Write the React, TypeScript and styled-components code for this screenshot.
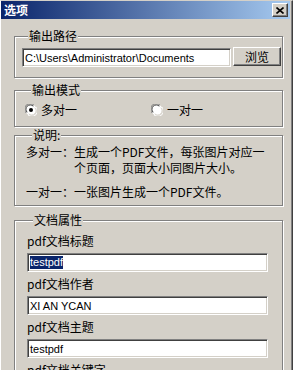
import React from "react";
import styled, { createGlobalStyle } from "styled-components";

const Global = createGlobalStyle`
  html, body { margin: 0; padding: 0; background: #d4d0c8; }
  body { font-family: "Noto Sans CJK SC", "Liberation Sans", sans-serif; font-size: 12px; color: #000; }
`;

const Window = styled.div`
  width: 293px;
  height: 370px;
  box-sizing: border-box;
  background: #d4d0c8;
  border-top: 1px solid #d4d0c8;
  border-left: 1px solid #ffffff;
  border-right: 1px solid #404040;
  box-shadow: inset -1px 0 0 #808080;
  padding-right: 2px;
  overflow: hidden;
  display: flex;
  flex-direction: column;
`;

const TitleBar = styled.div`
  height: 18px;
  flex: none;
  display: flex;
  align-items: center;
  justify-content: space-between;
  padding: 0 2px 0 3px;
  background: linear-gradient(to right, #0a246a, #a6caf0);
`;

const Title = styled.span`
  color: #fff;
  font-weight: bold;
  font-size: 12px;
  line-height: 14px;
`;

const CloseButton = styled.div`
  width: 16px;
  height: 14px;
  box-sizing: border-box;
  background: #d4d0c8;
  border: 1px solid;
  border-color: #ffffff #404040 #404040 #ffffff;
  box-shadow: inset -1px -1px 0 #808080;
  display: flex;
  align-items: center;
  justify-content: center;
`;

const Client = styled.div`
  padding: 10px 0 0 13px;
  display: flex;
  flex-direction: column;
`;

const Group = styled.fieldset<{ $top?: number; $pl: number; $pt: number; $pb: number }>`
  margin: ${(p) => p.$top ?? 0}px 0 0 0;
  width: 269px;
  box-sizing: border-box;
  padding: ${(p) => p.$pt}px 0 ${(p) => p.$pb}px ${(p) => p.$pl}px;
  border: 1px solid #808080;
  box-shadow: inset 1px 1px 0 #ffffff, 1px 1px 0 #ffffff;
  min-width: 0;
`;

const Legend = styled.legend`
  margin-left: 6px;
  padding: 0 1px;
  background: #d4d0c8;
  font-size: 12px;
  line-height: 14px;
  height: 14px;
`;

const PathRow = styled.div`
  display: flex;
  gap: 2px;
  align-items: flex-start;
`;

const TextBox = styled.div<{ $w: number; $mt?: number }>`
  width: ${(p) => p.$w}px;
  height: 19px;
  margin-top: ${(p) => p.$mt ?? 0}px;
  box-sizing: border-box;
  background: #fff;
  border: 1px solid;
  border-color: #808080 #ffffff #ffffff #808080;
  box-shadow: inset 1px 1px 0 #404040, inset -1px -1px 0 #d4d0c8;
  padding: 0 0 0 2px;
  display: flex;
  align-items: center;
  font-family: "Liberation Sans", sans-serif;
  font-size: 11px;
  white-space: nowrap;
  overflow: hidden;
`;

const Selected = styled.span`
  background: #0a246a;
  color: #fff;
  line-height: 13px;
`;

const PushButton = styled.div`
  width: 48px;
  height: 19px;
  box-sizing: border-box;
  background: #d4d0c8;
  border: 1px solid;
  border-color: #ffffff #404040 #404040 #ffffff;
  box-shadow: inset -1px -1px 0 #808080;
  display: flex;
  align-items: center;
  justify-content: center;
  font-size: 12px;
  line-height: 14px;
`;

const RadioRow = styled.div`
  display: grid;
  grid-template-columns: 126px auto;
  height: 14px;
`;

const RadioItem = styled.div`
  display: flex;
  align-items: center;
  gap: 4px;
  font-size: 12px;
  line-height: 14px;
`;

const DescGrid = styled.div`
  display: grid;
  grid-template-columns: 48px auto;
  row-gap: 8px;
  font-size: 12px;
  line-height: 16px;
  white-space: nowrap;
`;

const FieldList = styled.div`
  display: flex;
  flex-direction: column;
  gap: 4px;
`;

const FieldLabel = styled.div`
  font-size: 12px;
  line-height: 16px;
  height: 16px;
`;

const Radio = ({ checked }: { checked?: boolean }) => (
  <svg width="12" height="12" viewBox="0 0 12 12">
    <circle cx="6" cy="6" r="5.5" fill="#fff" />
    <path d="M1.2 9 A5.3 5.3 0 0 1 9 1.2" fill="none" stroke="#808080" strokeWidth="1" />
    <path d="M2.2 8.3 A4.3 4.3 0 0 1 8.3 2.2" fill="none" stroke="#404040" strokeWidth="1" />
    <path d="M10.8 3 A5.3 5.3 0 0 1 3 10.8" fill="none" stroke="#ffffff" strokeWidth="1" />
    <path d="M9.8 3.7 A4.3 4.3 0 0 1 3.7 9.8" fill="none" stroke="#d4d0c8" strokeWidth="1" />
    {checked && <circle cx="6" cy="6" r="2" fill="#000" />}
  </svg>
);

export default function App() {
  return (
    <>
      <Global />
      <Window>
        <TitleBar>
          <Title>选项</Title>
          <CloseButton>
            <svg width="8" height="7" viewBox="0 0 8 7">
              <path d="M0.5 0.5 L7.5 6.5 M7.5 0.5 L0.5 6.5" stroke="#000" strokeWidth="1.6" />
            </svg>
          </CloseButton>
        </TitleBar>
        <Client>
          <Group $pl={7} $pt={4} $pb={10}>
            <Legend>输出路径</Legend>
            <PathRow>
              <TextBox $w={209} $mt={1}>C:\Users\Administrator\Documents</TextBox>
              <PushButton>浏览</PushButton>
            </PathRow>
          </Group>
          <Group $top={5} $pl={10} $pt={6} $pb={9}>
            <Legend>输出模式</Legend>
            <RadioRow>
              <RadioItem>
                <Radio checked />
                多对一
              </RadioItem>
              <RadioItem>
                <Radio />
                一对一
              </RadioItem>
            </RadioRow>
          </Group>
          <Group $top={1} $pl={11} $pt={2} $pb={5}>
            <Legend>说明:</Legend>
            <DescGrid>
              <span>多对一：</span>
              <span>
                生成一个PDF文件，每张图片对应一
                <br />
                个页面，页面大小同图片大小。
              </span>
              <span>一对一：</span>
              <span>一张图片生成一个PDF文件。</span>
            </DescGrid>
          </Group>
          <Group $top={7} $pl={12} $pt={6} $pb={10}>
            <Legend>文档属性</Legend>
            <FieldList>
              <FieldLabel>pdf文档标题</FieldLabel>
              <TextBox $w={241}>
                <Selected>testpdf</Selected>
              </TextBox>
              <FieldLabel>pdf文档作者</FieldLabel>
              <TextBox $w={241}>XI AN YCAN</TextBox>
              <FieldLabel>pdf文档主题</FieldLabel>
              <TextBox $w={241}>testpdf</TextBox>
              <FieldLabel>pdf文档关键字</FieldLabel>
              <TextBox $w={241}>testpdf</TextBox>
            </FieldList>
          </Group>
        </Client>
      </Window>
    </>
  );
}
